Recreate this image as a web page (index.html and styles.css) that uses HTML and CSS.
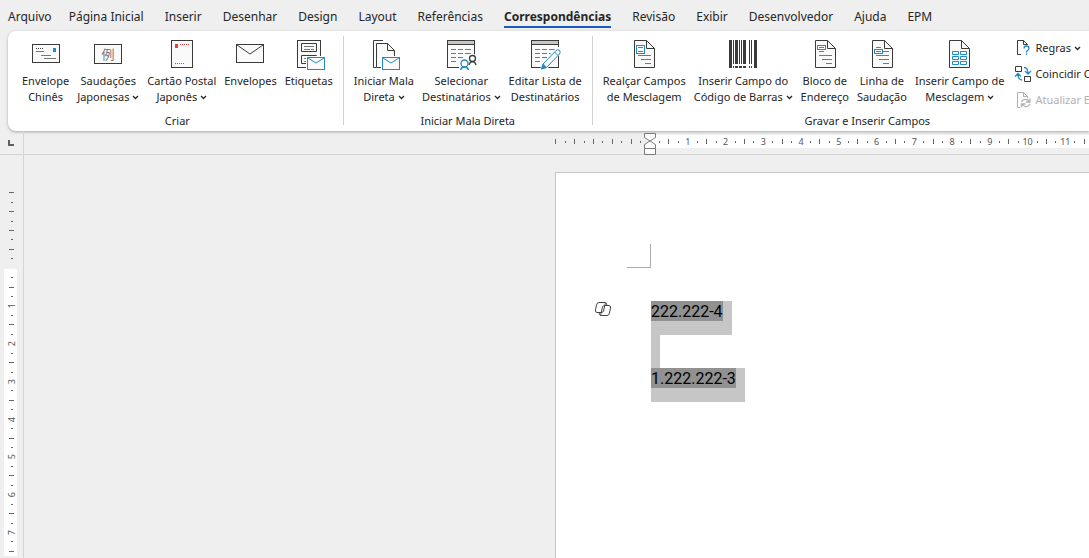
FILE: index.html
```html
<!DOCTYPE html>
<html lang="pt-BR">

<head>
    <meta charset="UTF-8">
    <meta name="viewport" content="width=device-width, initial-scale=1.0">
    <title>Correspondências</title>
    <link rel="stylesheet" href="styles.css">
</head>

<body>
    <!-- Guias -->
    <nav class="tabs">
        <a href="#" class="tab file">Arquivo</a>
        <a href="#" class="tab">Página Inicial</a>
        <a href="#" class="tab">Inserir</a>
        <a href="#" class="tab">Desenhar</a>
        <a href="#" class="tab">Design</a>
        <a href="#" class="tab">Layout</a>
        <a href="#" class="tab">Referências</a>
        <a href="#" class="tab active">Correspondências</a>
        <a href="#" class="tab">Revisão</a>
        <a href="#" class="tab">Exibir</a>
        <a href="#" class="tab">Desenvolvedor</a>
        <a href="#" class="tab">Ajuda</a>
        <a href="#" class="tab">EPM</a>
    </nav>

    <!-- Faixa de opções -->
    <div class="ribbon">
        <section class="group">
            <div class="group-items">
                <button type="button" class="tool">
                    <svg class="icon" viewBox="0 0 32 32">
                        <rect class="paper" x="2.5" y="6.5" width="27" height="18" />
                        <path class="dark" d="M6 10.5h8" stroke-dasharray="1 1" />
                        <path class="gray" d="M6 13.5h8M11 17.5h10M14 20.5h12" />
                        <rect class="blue-fill" x="23" y="10" width="3" height="4" />
                    </svg>
                    <span>Envelope<br>Chinês</span>
                </button>
                <button type="button" class="tool">
                    <svg class="icon" viewBox="0 0 32 32">
                        <rect class="paper" x="2.5" y="6.5" width="27" height="19" />
                        <text class="kanji" x="16" y="21">例</text>
                    </svg>
                    <span>Saudações<br>Japonesas <svg class="chevron" viewBox="0 0 7 5"><path d="M1 1l2.5 2.5L6 1" /></svg></span>
                </button>
                <button type="button" class="tool">
                    <svg class="icon" viewBox="0 0 32 32">
                        <rect class="paper" x="5.5" y="2.5" width="21" height="27" />
                        <rect class="red-fill" x="9" y="6" width="3" height="4" />
                        <path class="red" d="M14 6.5h9M9 25.5h9" stroke-dasharray="1 1" />
                    </svg>
                    <span>Cartão Postal<br>Japonês <svg class="chevron" viewBox="0 0 7 5"><path d="M1 1l2.5 2.5L6 1" /></svg></span>
                </button>
                <button type="button" class="tool">
                    <svg class="icon" viewBox="0 0 32 32">
                        <rect class="paper" x="2.5" y="6.5" width="27" height="18" />
                        <path class="dark" d="M3 7l13 9 13-9" />
                    </svg>
                    <span>Envelopes</span>
                </button>
                <button type="button" class="tool">
                    <svg class="icon" viewBox="0 0 32 32">
                        <rect class="paper" x="4.5" y="2.5" width="23" height="27" />
                        <path class="dark" d="M8.5 5.5h15v8h-15zM8.5 17.5h15v8h-15z" />
                        <path class="gray" d="M11 8.5h10M11 11.5h6M18 11.5h3M11 20.5h4M11 23.5h3" />
                        <path class="cut" d="M13 18h20v16H13z" />
                        <rect class="paper blue" x="14.5" y="19.5" width="17" height="12" />
                        <path class="blue" d="M15 20l8 5 8-5" />
                    </svg>
                    <span>Etiquetas</span>
                </button>
            </div>
            <div class="group-name">Criar</div>
        </section>

        <section class="group">
            <div class="group-items">
                <button type="button" class="tool">
                    <svg class="icon" viewBox="0 0 32 32">
                        <path class="dark" d="M15 2.5H5.5v27H8" />
                        <path class="paper" d="M8.5 29.5v-24h11l7 7v17z" />
                        <path class="dark" d="M19.5 5.5v7h7" />
                        <path class="cut" d="M13 18h20v16H13z" />
                        <rect class="paper blue" x="14.5" y="19.5" width="17" height="12" />
                        <path class="blue" d="M15 20l8 5 8-5" />
                    </svg>
                    <span>Iniciar Mala<br>Direta <svg class="chevron" viewBox="0 0 7 5"><path d="M1 1l2.5 2.5L6 1" /></svg></span>
                </button>
                <button type="button" class="tool">
                    <svg class="icon" viewBox="0 0 32 32">
                        <rect class="paper" x="2.5" y="2.5" width="27" height="27" />
                        <rect class="header" x="2.5" y="2.5" width="27" height="4" />
                        <path class="gray" d="M6 11.5h5M13 11.5h5M20 11.5h6M6 15.5h5M13 15.5h5M20 15.5h6M6 19.5h5M13 19.5h5M6 23.5h5" />
                        <path class="cut" d="M14 32c0-9 2-12 6-12 1-5 11-6 12-1v13z" />
                        <circle class="dark person" cx="27.5" cy="20.5" r="3" />
                        <path class="dark person" d="M24 27c1-4.5 6-4.5 7 0" />
                        <circle class="blue person" cx="19.5" cy="25.5" r="3.5" />
                        <path class="blue person" d="M15.5 32c1-4 7-4 8 0" />
                    </svg>
                    <span>Selecionar<br>Destinatários <svg class="chevron" viewBox="0 0 7 5"><path d="M1 1l2.5 2.5L6 1" /></svg></span>
                </button>
                <button type="button" class="tool">
                    <svg class="icon" viewBox="0 0 32 32">
                        <rect class="paper" x="2.5" y="2.5" width="27" height="27" />
                        <rect class="header" x="2.5" y="2.5" width="27" height="4" />
                        <path class="gray" d="M6 11.5h5M13 11.5h5M20 11.5h6M6 15.5h5M13 15.5h5M20 15.5h3M6 19.5h5M13 19.5h5M6 23.5h5" />
                        <path class="cut" d="M11 32l2-7L28 9h5v5L17 32z" />
                        <path class="paper blue" d="M12.5 31l1.5-5L27 12.5q2-1.5 3.5 0t0 3.5L17.5 29.5z" />
                        <path class="blue" d="M25.5 14l3.5 3.5" />
                        <path class="blue-fill" d="M12 31.5l2-6 4 4z" />
                    </svg>
                    <span>Editar Lista de<br>Destinatários</span>
                </button>
            </div>
            <div class="group-name">Iniciar Mala Direta</div>
        </section>

        <section class="group">
            <div class="group-items">
                <button type="button" class="tool">
                    <svg class="icon" viewBox="0 0 32 32">
                        <path class="paper" d="M6.5 2.5h12l8 8v19h-20z" />
                        <path class="dark" d="M18.5 2.5v8h8" />
                        <path class="gray" d="M10 17.5h13M13 21.5h10M17 25.5h6" />
                        <rect class="paper blue" x="8.5" y="7.5" width="8" height="8" />
                        <path class="gray" d="M10 9.5h5M10 13.5h5" />
                    </svg>
                    <span>Realçar Campos<br>de Mesclagem</span>
                </button>
                <button type="button" class="tool">
                    <svg class="icon" viewBox="0 0 32 32">
                        <path class="dark-fill" d="M2 2h3v28H2zM6 2h1v24H6zM8 2h3v24H8zM12 2h1v24h-1zM14 2h1v24h-1zM16 2h3v24h-3zM22 2h1v24h-1zM24 2h1v24h-1zM27 2h3v28h-3zM6 28h1v2H6zM8 28h3v2H8zM12 28h3v2h-3zM16 28h3v2h-3zM22 28h1v2h-1zM24 28h1v2h-1z" />
                    </svg>
                    <span>Inserir Campo do<br>Código de Barras <svg class="chevron" viewBox="0 0 7 5"><path d="M1 1l2.5 2.5L6 1" /></svg></span>
                </button>
                <button type="button" class="tool">
                    <svg class="icon" viewBox="0 0 32 32">
                        <path class="paper" d="M6.5 2.5h12l8 8v19h-20z" />
                        <path class="dark" d="M18.5 2.5v8h8" />
                        <path class="gray" d="M10 13.5h5M10 17.5h13M13 21.5h10M17 25.5h6" />
                        <rect class="paper blue" x="8.5" y="7.5" width="8" height="4" />
                        <path class="gray" d="M10 9.5h5" />
                    </svg>
                    <span>Bloco de<br>Endereço</span>
                </button>
                <button type="button" class="tool">
                    <svg class="icon" viewBox="0 0 32 32">
                        <path class="paper" d="M6.5 2.5h12l8 8v19h-20z" />
                        <path class="dark" d="M18.5 2.5v8h8" />
                        <path class="gray" d="M10 9.5h5M17 13.5h6M10 17.5h13M13 21.5h10M17 25.5h6" />
                        <rect class="paper blue" x="8.5" y="11.5" width="8" height="4" />
                        <path class="gray" d="M10 13.5h5" />
                    </svg>
                    <span>Linha de<br>Saudação</span>
                </button>
                <button type="button" class="tool">
                    <svg class="icon" viewBox="0 0 32 32">
                        <path class="paper" d="M5.5 2.5h12l8 8v19h-20z" />
                        <path class="dark" d="M17.5 2.5v8h8" />
                        <path class="blue" d="M8.5 13.5h6v3h-6zM16.5 13.5h6v3h-6zM8.5 18.5h6v3h-6zM16.5 18.5h6v3h-6zM8.5 23.5h6v3h-6zM16.5 23.5h6v3h-6z" />
                    </svg>
                    <span>Inserir Campo de<br>Mesclagem <svg class="chevron" viewBox="0 0 7 5"><path d="M1 1l2.5 2.5L6 1" /></svg></span>
                </button>
                <div class="small-tools">
                    <button type="button" class="small-tool">
                        <svg class="small-icon" viewBox="0 0 16 16">
                            <path class="dark" d="M6 14.5H2.5v-14h6l4 4V5M8.5.5v4h4" />
                            <path class="blue thick" d="M9 8.5q0-2.5 2.5-2.5T14 8.5q0 1-1.5 2t-1 2M11.5 13.5V15" />
                        </svg>
                        <span>Regras <svg class="chevron" viewBox="0 0 7 5"><path d="M1 1l2.5 2.5L6 1" /></svg></span>
                    </button>
                    <button type="button" class="small-tool">
                        <svg class="small-icon" viewBox="0 0 16 16">
                            <path class="dark" d="M.5.5h6v5h-6zM9.5 10.5h6v5h-6z" />
                            <path class="blue thick" d="M9 1.5q4 0 4 6M10 5l3 3 3-3M7 14q-4 0-4-6M0 10.5l3-3 3 3" />
                        </svg>
                        <span>Coincidir Campos</span>
                    </button>
                    <button type="button" class="small-tool" disabled>
                        <svg class="small-icon" viewBox="0 0 16 16">
                            <path class="pale" d="M5 15.5H2.5v-15h6l4 4V6M8.5.5v4h4" />
                            <path class="pale thick" d="M6.5 10q1.5-3 4.5-2.5 2 0 3.5 2.5M15 6.5V10h-4M15 12q-1.5 3-4.5 2.5-2 0-3.5-2.5M6.5 15.5V12h4" />
                        </svg>
                        <span>Atualizar Etiquetas</span>
                    </button>
                </div>
            </div>
            <div class="group-name">Gravar e Inserir Campos</div>
        </section>
    </div>

    <!-- Régua horizontal -->
    <div class="top-ruler">
        <div class="corner">
            <svg class="tab-stop" viewBox="0 0 6 6"><path d="M0 0h2v4h4v2H0z" /></svg>
        </div>
        <div class="h-track">
            <div class="ticks" id="hTicks"></div>
            <svg class="indent" viewBox="0 0 12 22">
                <path d="M.5.5h11v4L6 8 .5 4.5zM.5 15.5v-4L6 8l5.5 3.5v4zM.5 15.5h11v6H.5z" />
            </svg>
        </div>
    </div>

    <!-- Área do documento -->
    <main class="workspace">
        <div class="v-ruler">
            <div class="ticks vertical" id="vTicks"></div>
        </div>
        <div class="canvas">
            <article class="page">
                <div class="margin-mark"></div>
                <div class="text">
                    <svg class="copilot" viewBox="0 0 16 14">
                        <path d="M4 .5h6.5L8.5 9q-.5 1.5-2 1.5H2Q0 10.5.5 8L1.5 3Q2 .5 4 .5zM12 13.5H5.5L7.5 5Q8 3.5 9.5 3.5H14q2 0 1.500 2.500l-1 5q-.5 2.500-2.500 2.500zM10.500.5q1 0 1.500 3M5.500 13.500q-1 0-1.500-3" />
                    </svg>
                    <p class="line"><span>222.222-4</span></p>
                    <p class="line"></p>
                    <p class="line"><span>1.222.222-3</span></p>
                </div>
            </article>
        </div>
    </main>

    <script>
        // Quatro marcas por centímetro, o zero fica na margem
        function drawTicks(id, from, to) {
            const ruler = document.getElementById(id);
            for (let i = from; i <= to; i++) {
                const tick = document.createElement('span');
                if (i > 0 && i % 4 === 0) {
                    tick.className = 'number';
                    tick.textContent = i / 4;
                } else if (i !== 0) {
                    tick.className = i % 2 === 0 ? 'bar' : 'dot';
                }
                ruler.appendChild(tick);
            }
        }

        drawTicks('hTicks', -10, 46);
        drawTicks('vTicks', -8, 30);
    </script>
</body>

</html>
```

FILE: styles.css
```css
* {
    box-sizing: border-box;
}

body {
    display: flex;
    flex-direction: column;
    height: 100vh;
    margin: 0;
    overflow: hidden;
    background-color: #efefef;
    color: #262626;
    font-family: "Noto Sans", "Open Sans", "Noto Sans CJK JP", sans-serif;
    font-size: 12px;
    line-height: 16px;
}

button {
    padding: 0;
    border: none;
    background: none;
    color: inherit;
    font: inherit;
    white-space: nowrap;
    cursor: pointer;
}

svg {
    fill: none;
    overflow: visible;
}

/* Guias */
.tabs {
    display: flex;
    flex-shrink: 0;
    gap: 21px;
    height: 31px;
    padding: 9px 8px 0;
}

.tab {
    height: 19px;
    color: #262626;
    text-decoration: none;
    white-space: nowrap;
}

.tab.file {
    margin-right: -4px;
}

.tab.active {
    border-bottom: 2px solid #185abd;
    font-weight: 700;
}

/* Faixa de opções */
.ribbon {
    display: flex;
    flex-shrink: 0;
    height: 100px;
    margin-left: 8px;
    padding: 5px 0 0 4px;
    border-radius: 8px 0 0 8px;
    background-color: #fff;
    box-shadow: 0 1px 3px rgba(0, 0, 0, 0.3);
    font-size: 11px;
    overflow: hidden;
}

.group {
    display: flex;
    flex-direction: column;
    flex-shrink: 0;
    height: 89px;
    padding: 2px 10px 0;
    border-right: 1px solid #d1d1d1;
}

.group-items {
    display: flex;
    flex-shrink: 0;
    align-items: flex-start;
    gap: 8px;
    height: 75px;
}

.group-name {
    text-align: center;
}

.tool {
    display: flex;
    flex-direction: column;
    align-items: center;
    gap: 3px;
}

.icon {
    width: 32px;
    height: 32px;
}

.small-tools {
    display: flex;
    flex-direction: column;
    gap: 10px;
    padding: 2px 0 0 3px;
}

.small-tool {
    display: flex;
    align-items: center;
    gap: 4px;
}

.small-tool:disabled {
    color: #b1b1b1;
}

.small-icon {
    width: 16px;
    height: 16px;
}

.chevron {
    width: 7px;
    height: 5px;
    margin-bottom: 1px;
    stroke: #262626;
    stroke-width: 1.3;
}

.paper {
    fill: #fafafa;
    stroke: #3b3a39;
}

.dark {
    stroke: #3b3a39;
}

.gray {
    stroke: #797774;
}

.pale {
    stroke: #b1b1b1;
}

.blue {
    stroke: #1e8bcd;
}

.red {
    stroke: #ed3d3b;
}

.thick,
.person {
    stroke-width: 1.3;
}

.header {
    fill: #c8c6c4;
    stroke: #3b3a39;
}

.cut {
    fill: #fff;
}

.dark-fill {
    fill: #3b3a39;
}

.blue-fill {
    fill: #1e8bcd;
}

.red-fill {
    fill: #ed3d3b;
}

.kanji {
    fill: #797774;
    font-family: "Noto Sans CJK JP", sans-serif;
    font-size: 13px;
    text-anchor: middle;
}

/* Réguas */
.top-ruler {
    display: flex;
    flex-shrink: 0;
    height: 24px;
    border-bottom: 1px solid #d4d4d4;
}

.corner {
    flex-shrink: 0;
    width: 24px;
    padding: 9px 8px;
    border-right: 1px solid #d4d4d4;
}

.tab-stop {
    display: block;
    width: 6px;
    height: 6px;
    fill: #5f5f5f;
}

.h-track {
    position: relative;
    flex: 1;
    min-width: 0;
    height: 13px;
    margin-top: 4px;
    padding-left: 527px;
    background: linear-gradient(#fff, #fff) 626px 0 no-repeat;
}

.ticks {
    display: flex;
    height: 13px;
    color: #555;
    font-size: 9px;
    overflow: hidden;
}

.ticks span {
    display: flex;
    flex: none;
    align-items: center;
    justify-content: center;
    width: 0.25cm;
}

.ticks .bar::before,
.ticks .dot::before {
    content: "";
    width: 1px;
    height: 5px;
    background-color: #666;
}

.ticks .dot::before {
    height: 2px;
}

.indent {
    position: absolute;
    top: -2px;
    left: 620px;
    width: 12px;
    height: 22px;
    fill: #fff;
    stroke: #7a7a7a;
}

.workspace {
    display: flex;
    flex: 1;
    min-height: 0;
}

.v-ruler {
    flex-shrink: 0;
    width: 24px;
    padding: 33px 6px 0 4px;
    border-right: 1px solid #d4d4d4;
    overflow: hidden;
}

.ticks.vertical {
    flex-direction: column;
    width: 13px;
    height: auto;
    padding-left: 2px;
    background: linear-gradient(#fff, #fff) 0 81px no-repeat;
}

.ticks.vertical span {
    width: auto;
    height: 0.25cm;
}

.ticks.vertical .number {
    transform: rotate(-90deg);
}

.ticks.vertical .bar::before {
    width: 5px;
    height: 1px;
}

.ticks.vertical .dot::before {
    width: 2px;
    height: 1px;
}

/* Documento */
.canvas {
    flex: 1;
    padding: 17px 0 0 531px;
    overflow: hidden;
}

.page {
    width: 21cm;
    min-height: 29.7cm;
    padding: 71px 95px;
    border: 1px solid #c6c6c6;
    background-color: #fff;
}

.margin-mark {
    width: 24px;
    height: 24px;
    margin: 0 0 33px -24px;
    border: solid #ababab;
    border-width: 0 1px 1px 0;
}

.text {
    position: relative;
    color: #000;
    font-family: Roboto, "Liberation Sans", sans-serif;
    font-size: 16px;
    line-height: 18px;
}

.line {
    width: fit-content;
    min-height: 33px;
    margin: 0;
    padding-right: 9px;
    background-color: #c6c6c6;
}

.line span {
    display: block;
    margin-bottom: 14px;
    padding-top: 2px;
    background-color: #919191;
}

.line:has(span) {
    display: flow-root;
}

.copilot {
    position: absolute;
    top: 1px;
    left: -56px;
    width: 16px;
    height: 14px;
    stroke: #444;
}
```
